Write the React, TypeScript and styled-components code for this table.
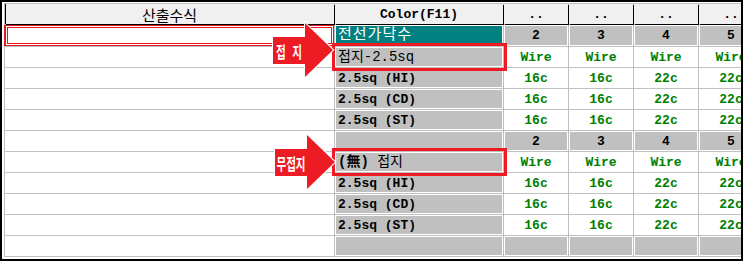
import React from "react";
import styled, { createGlobalStyle, css } from "styled-components";

const GlobalStyle = createGlobalStyle`
  body {
    margin: 0;
    background: #fff;
  }
`;

type Tone = "teal" | "grey";

type Row = {
  color: React.ReactNode;
  tone: Tone;
  kr?: boolean;
  mark?: boolean;
  selected?: boolean;
  values: string[];
  numbered?: boolean;
};

const WIRE = ["Wire", "Wire", "Wire", "Wire"];
const CORES = ["16c", "16c", "22c", "22c"];
const NUMS = ["2", "3", "4", "5"];
const EMPTY = ["", "", "", ""];

const rows: Row[] = [
  { color: "전선가닥수", tone: "teal", kr: true, selected: true, values: NUMS, numbered: true },
  { color: "접지-2.5sq", tone: "grey", kr: true, mark: true, values: WIRE },
  { color: "2.5sq (HI)", tone: "grey", values: CORES },
  { color: "2.5sq (CD)", tone: "grey", values: CORES },
  { color: "2.5sq (ST)", tone: "grey", values: CORES },
  { color: "", tone: "grey", values: NUMS, numbered: true },
  {
    color: (
      <>
        <b>(無)</b> 접지
      </>
    ),
    tone: "grey",
    kr: true,
    mark: true,
    values: WIRE,
  },
  { color: "2.5sq (HI)", tone: "grey", values: CORES },
  { color: "2.5sq (CD)", tone: "grey", values: CORES },
  { color: "2.5sq (ST)", tone: "grey", values: CORES },
  { color: "", tone: "grey", values: EMPTY, numbered: true },
];

const App = () => {
  return (
    <>
      <GlobalStyle />
      <Frame>
        <Grid>
          <HeadCell $first>산출수식</HeadCell>
          <HeadCell $mono>Color(F11)</HeadCell>
          <HeadCell $mono>..</HeadCell>
          <HeadCell $mono>..</HeadCell>
          <HeadCell $mono>..</HeadCell>
          <HeadCell $mono>..</HeadCell>

          {rows.map((row, i) => (
            <React.Fragment key={i}>
              <FormulaCell $selected={row.selected} />
              <ColorCell $tone={row.tone} $kr={row.kr} $mark={row.mark}>
                <span>{row.color}</span>
                {row.mark && <Mark />}
              </ColorCell>
              {row.values.map((v, j) => (
                <ValueCell key={j} $grey={row.numbered}>
                  {v}
                </ValueCell>
              ))}
            </React.Fragment>
          ))}
        </Grid>

        <Callout $left={270} $top={20} label="접 지" />
        <Callout $left={272} $top={132} label="무접지" />
      </Frame>
    </>
  );
};

export default App;

const Callout = ({
  $left,
  $top,
  label,
}: {
  $left: number;
  $top: number;
  label: string;
}) => (
  <CalloutBox style={{ left: $left, top: $top }}>
    <svg width="64" height="58" viewBox="0 0 64 58">
      <polygon
        points="1,15 33,15 33,1 61,28 33,55 33,42 1,42"
        fill="#ed1c24"
        stroke="#fff"
        strokeWidth="2"
        strokeLinejoin="miter"
        paintOrder="stroke"
      />
    </svg>
    <CalloutLabel>{label}</CalloutLabel>
  </CalloutBox>
);

const Frame = styled.div`
  position: relative;
  width: 743px;
  height: 261px;
  box-sizing: border-box;
  border: 2px solid #000;
  padding: 1px 0 0 2px;
  overflow: hidden;
`;

const Grid = styled.div`
  display: grid;
  width: max-content;
  grid-template-columns: 329px 168px repeat(4, 64px);
  grid-template-rows: 20px 21px repeat(10, 20px);
  gap: 1px;
  padding: 1px 0 1px 1px;
  background: #c0c0c0;
`;

const HeadCell = styled.div<{ $mono?: boolean; $first?: boolean }>`
  display: flex;
  align-items: center;
  justify-content: center;
  background: #f0f0f0;
  color: #000;
  box-shadow: 1px 1px 0 #000 ${({ $first }) => ($first ? ", inset 1px 0 0 #000" : "")};
  font-family: ${({ $mono }) =>
    $mono
      ? `"Liberation Mono", monospace`
      : `"Noto Sans CJK KR", sans-serif`};
  font-size: ${({ $mono }) => ($mono ? "13px" : "15px")};
  font-weight: ${({ $mono }) => ($mono ? 700 : 400)};
  line-height: 1;
`;

const FormulaCell = styled.div<{ $selected?: boolean }>`
  background: #fff;
  ${({ $selected }) =>
    $selected &&
    css`
      box-shadow: -1px 0 0 #e8161e, inset 0 0 0 1px #e8161e,
        inset 0 0 0 2px #fff, inset 0 0 0 3px #e8161e;
    `}
`;

const ColorCell = styled.div<{ $tone: Tone; $kr?: boolean; $mark?: boolean }>`
  position: ${({ $mark }) => ($mark ? "relative" : "static")};
  display: flex;
  align-items: center;
  padding-left: 3px;
  white-space: pre;
  background: ${({ $tone }) => ($tone === "teal" ? "#008080" : "#c0c0c0")};
  color: ${({ $tone }) => ($tone === "teal" ? "#fff" : "#000")};
  box-shadow: inset 0 0 0 1px #fff;
  font-family: "Liberation Mono", "Noto Sans CJK KR", monospace;
  font-size: 13px;
  font-weight: 700;
  line-height: 1;

  ${({ $kr }) =>
    $kr &&
    css`
      font-size: 14px;
      font-weight: 400;
    `}

  ${({ $tone }) =>
    $tone === "teal" &&
    css`
      font-size: 15px;
      letter-spacing: 1px;
    `}
`;

const Mark = styled.span`
  position: absolute;
  top: -4px;
  bottom: -4px;
  left: -3px;
  right: -4px;
  border: 3px solid #ed1c24;
  pointer-events: none;
`;

const ValueCell = styled.div<{ $grey?: boolean }>`
  display: flex;
  align-items: center;
  justify-content: center;
  background: ${({ $grey }) => ($grey ? "#c0c0c0" : "#fff")};
  color: ${({ $grey }) => ($grey ? "#000" : "#008000")};
  box-shadow: ${({ $grey }) => ($grey ? "inset 0 0 0 1px #fff" : "none")};
  font-family: "Liberation Mono", monospace;
  font-size: 13px;
  font-weight: 700;
  line-height: 1;
`;

const CalloutBox = styled.div`
  position: absolute;
  width: 64px;
  height: 58px;

  svg {
    display: block;
  }
`;

const CalloutLabel = styled.span`
  position: absolute;
  left: -4px;
  top: 15px;
  width: 42px;
  height: 27px;
  display: flex;
  align-items: center;
  justify-content: center;
  color: #fff;
  font-family: "Noto Sans CJK KR", sans-serif;
  font-size: 16px;
  font-weight: 700;
  white-space: pre;
  word-spacing: 6px;
  transform: scaleX(0.66);
`;
